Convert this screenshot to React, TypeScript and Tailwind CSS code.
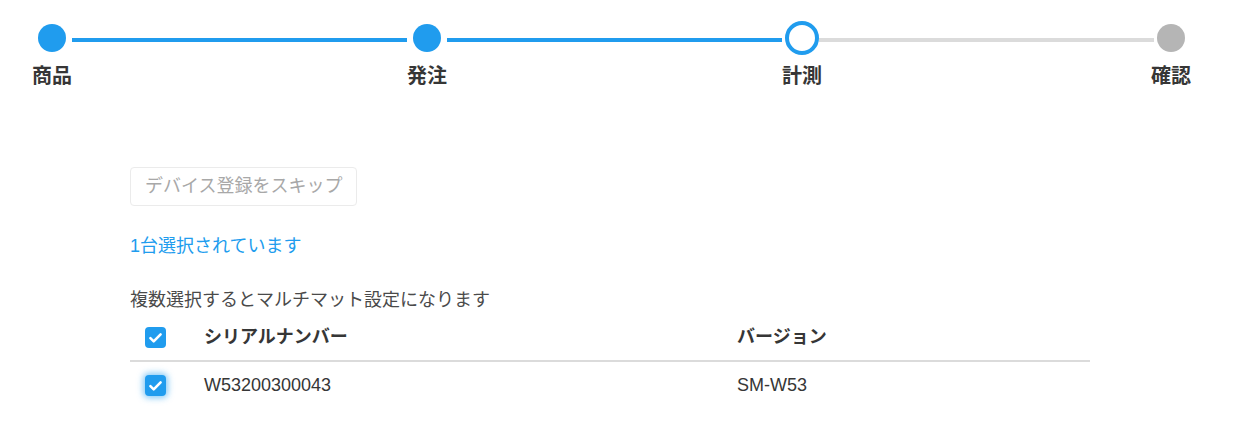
import { Fragment } from "react";

type TStep = { label: string; state: "done" | "active" | "todo" };

const steps: TStep[] = [
	{ label: "商品", state: "done" },
	{ label: "発注", state: "done" },
	{ label: "計測", state: "active" },
	{ label: "確認", state: "todo" },
];

const rows = [{ serial: "W53200300043", version: "SM-W53" }];

function Circle({ state }: { state: TStep["state"] }) {
	if (state === "active")
		return (
			<div className="w-[34px] h-[34px] rounded-full border-[4px] border-[#209cee] bg-white" />
		);
	return (
		<div
			className={
				state === "done"
					? "w-[28px] h-[28px] rounded-full bg-[#209cee]"
					: "w-[28px] h-[28px] rounded-full bg-[#b5b5b5]"
			}
		/>
	);
}

function Checkbox({ focused }: { focused?: boolean }) {
	return (
		<div
			className={
				focused
					? "w-[21px] h-[21px] rounded-[4px] bg-[#209cee] flex items-center justify-center shadow-[0_0_6px_2px_rgba(32,156,238,0.55)]"
					: "w-[21px] h-[21px] rounded-[4px] bg-[#209cee] flex items-center justify-center"
			}
		>
			<svg width="17" height="17" viewBox="0 0 16 16" fill="none">
				<path
					d="M3.2 8.6l3.1 3L12.8 5"
					stroke="white"
					strokeWidth="2.4"
					strokeLinecap="round"
					strokeLinejoin="round"
				/>
			</svg>
		</div>
	);
}

export default function App() {
	return (
		<div
			className="w-[1256px] h-[428px] bg-white pt-[21px] text-[#4a4a4a]"
			style={{ fontFamily: '"Liberation Sans", "Noto Sans CJK JP", sans-serif' }}
		>
			{/* stepper */}
			<div className="flex items-start pl-[35px] pr-[68px]">
				{steps.map((s, i) => (
					<Fragment key={s.label}>
						<div className="flex flex-col items-center w-[34px] shrink-0">
							<div className="h-[34px] flex items-center justify-center">
								<Circle state={s.state} />
							</div>
							<div className="mt-[8px] text-[20px] leading-[26px] font-bold text-[#363636] whitespace-nowrap">
								{s.label}
							</div>
						</div>
						{i < steps.length - 1 && (
							<div
								className={
									s.state === "done" && steps[i + 1].state !== "todo"
										? "flex-1 h-[4px] mt-[17px] mx-[3px] bg-[#209cee]"
										: "flex-1 h-[4px] mt-[17px] mx-[0px] bg-[#dbdbdb]"
								}
							/>
						)}
					</Fragment>
				))}
			</div>

			<div className="ml-[130px] w-[960px]">
				<button
					disabled
					className="mt-[78px] h-[39px] px-[14px] border border-[#ebebeb] rounded-[4px] text-[18px] leading-[37px] text-[#a8a8a8] bg-white"
				>
					デバイス登録をスキップ
				</button>

				<div className="mt-[27px] text-[18px] leading-[27px] text-[#209cee]">
					1台選択されています
				</div>

				<div className="mt-[27px] text-[18px] leading-[27px]">
					複数選択するとマルチマット設定になります
				</div>

				<div className="flex items-center h-[48px] border-b-2 border-[#dbdbdb] text-[18px] font-bold text-[#363636]">
					<div className="w-[74px] pl-[15px]">
						<Checkbox />
					</div>
					<div className="w-[533px]">シリアルナンバー</div>
					<div className="flex-1">バージョン</div>
				</div>
				{rows.map((r) => (
					<div key={r.serial} className="flex items-center h-[46px] text-[18px] text-[#363636]">
						<div className="w-[74px] pl-[15px]">
							<Checkbox focused />
						</div>
						<div className="w-[533px]">{r.serial}</div>
						<div className="flex-1">{r.version}</div>
					</div>
				))}
			</div>
		</div>
	);
}
